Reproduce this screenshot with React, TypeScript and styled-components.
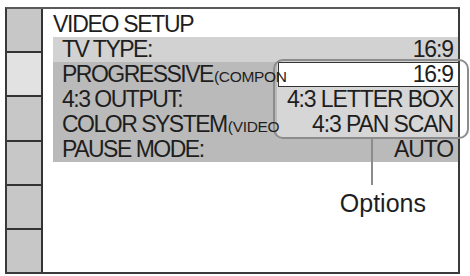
import styled, { createGlobalStyle } from "styled-components";

const GlobalStyle = createGlobalStyle`
  html, body {
    margin: 0;
    padding: 0;
    background: #ffffff;
  }
  body {
    font-family: "Liberation Sans", Arial, sans-serif;
    color: #1e1e1e;
  }
`;

type Row = {
  label: string;
  suffix?: string;
  value?: string;
  active?: boolean;
};

const rows: Row[] = [
  { label: "TV TYPE:", value: "16:9", active: true },
  { label: "PROGRESSIVE", suffix: "(COMPON" },
  { label: "4:3 OUTPUT:" },
  { label: "COLOR SYSTEM", suffix: "(VIDEO" },
  { label: "PAUSE MODE:", value: "AUTO" },
];

const options = ["16:9", "4:3 LETTER BOX", "4:3 PAN SCAN"];

const App = () => {
  return (
    <>
      <GlobalStyle />
      <Screen>
        <Sidebar>
          {[0, 1, 2, 3, 4, 5].map((i) => (
            <SideCell key={i} $lit={i === 1} />
          ))}
        </Sidebar>
        <Main>
          <Title>VIDEO SETUP</Title>
          <Band>
            {rows.map((row) => (
              <MenuRow key={row.label} $active={row.active}>
                <Label>
                  {row.label}
                  {row.suffix ? <Suffix>{row.suffix}</Suffix> : null}
                </Label>
                {row.value ? <Value>{row.value}</Value> : null}
              </MenuRow>
            ))}
          </Band>
          <Popup>
            {options.map((opt, i) => (
              <OptionRow key={opt} $selected={i === 0}>
                {opt}
              </OptionRow>
            ))}
          </Popup>
          <Annotation>
            <AnnotationText>Options</AnnotationText>
          </Annotation>
        </Main>
      </Screen>
    </>
  );
};

const Screen = styled.div`
  display: flex;
  box-sizing: border-box;
  width: 455px;
  height: 267px;
  margin: 7px 0 0 5px;
  border: 2px solid #3a3a3a;
  border-top-color: #5a5a5a;
  background: #ffffff;
`;

const Sidebar = styled.div`
  display: grid;
  grid-template-rows: repeat(6, 1fr);
  gap: 2px;
  width: 34px;
  flex-shrink: 0;
  background: #333333;
  border-right: 2px solid #333333;
`;

const SideCell = styled.div<{ $lit?: boolean }>`
  background: ${({ $lit }) => ($lit ? "#e2e2e2" : "#c7c7c7")};
`;

const Main = styled.div`
  position: relative;
  flex: 1;
  display: flex;
  flex-flow: column nowrap;
`;

const Title = styled.div`
  height: 28px;
  box-sizing: border-box;
  padding: 2px 0 0 10px;
  font-size: 23px;
  line-height: 26px;
  letter-spacing: -1.3px;
  white-space: nowrap;
`;

const Band = styled.div`
  display: flex;
  flex-flow: column nowrap;
  margin-left: 10px;
  background: #bababa;
`;

const MenuRow = styled.div<{ $active?: boolean }>`
  display: flex;
  justify-content: space-between;
  align-items: baseline;
  height: 25px;
  padding: 0 5px 0 9px;
  font-size: 23px;
  line-height: 25px;
  white-space: nowrap;
  background: ${({ $active }) => ($active ? "#d2d2d2" : "transparent")};
`;

const Label = styled.span`
  position: relative;
  z-index: 2;
  letter-spacing: -1.5px;
`;

const Suffix = styled.span`
  margin-left: 1px;
  font-size: 15.5px;
  letter-spacing: -0.3px;
`;

const Value = styled.span`
  letter-spacing: -1.1px;
`;

const Popup = styled.div`
  position: absolute;
  z-index: 1;
  top: 53px;
  left: 234px;
  right: 0;
  display: flex;
  flex-flow: column nowrap;
  background: #d6d6d6;

  &::before {
    content: "";
    position: absolute;
    top: -3px;
    bottom: -2px;
    left: -4px;
    right: -11px;
    border: 2px solid #8c8c8c;
    border-radius: 10px;
    pointer-events: none;
  }

  &::after {
    content: "";
    position: absolute;
    top: calc(100% + 2px);
    left: 94px;
    width: 2px;
    height: 46px;
    background: #8c8c8c;
  }
`;

const OptionRow = styled.div<{ $selected?: boolean }>`
  box-sizing: border-box;
  height: 25px;
  padding-right: 5px;
  margin-left: ${({ $selected }) => ($selected ? "1px" : "0")};
  text-align: right;
  font-size: 23px;
  line-height: ${({ $selected }) => ($selected ? "22px" : "25px")};
  letter-spacing: -1.1px;
  white-space: nowrap;
  background: ${({ $selected }) => ($selected ? "#ffffff" : "transparent")};
  border: ${({ $selected }) => ($selected ? "1.5px solid #333333" : "none")};
  border-right: none;
`;

const Annotation = styled.div`
  display: flex;
  justify-content: flex-end;
  margin-top: 26px;
  padding-right: 32px;
`;

const AnnotationText = styled.span`
  font-size: 25px;
  line-height: 30px;
`;

export default App;
